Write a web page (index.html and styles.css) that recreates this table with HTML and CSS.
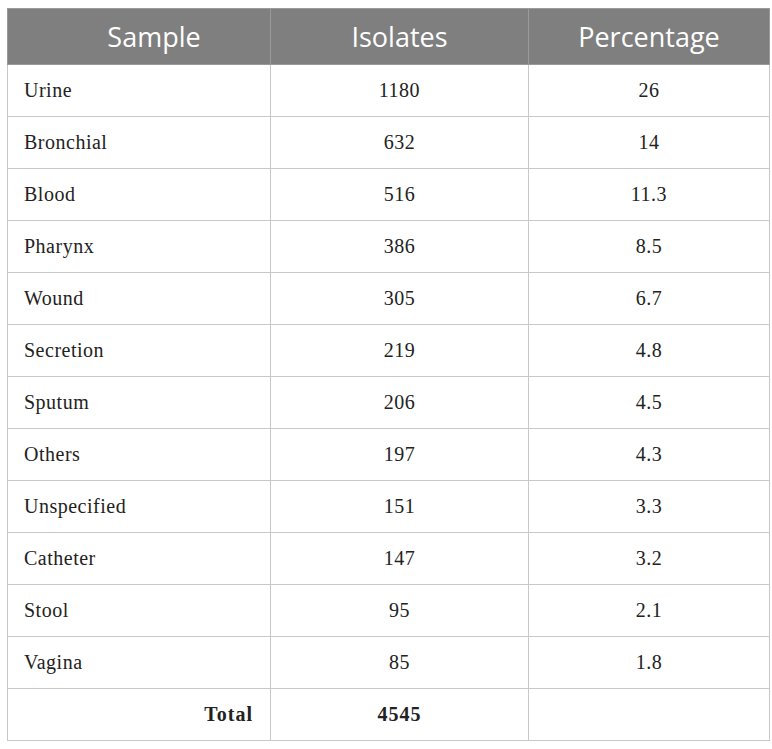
FILE: index.html
```html
<!DOCTYPE html>
<html>
<head>
<meta charset="utf-8">
<link rel="stylesheet" href="styles.css">
</head>
<body>
<table class="data">
  <thead>
    <tr><th class="c1">Sample</th><th class="c2">Isolates</th><th class="c3">Percentage</th></tr>
  </thead>
  <tbody>
    <tr><td class="name">Urine</td><td>1180</td><td>26</td></tr>
    <tr><td class="name">Bronchial</td><td>632</td><td>14</td></tr>
    <tr><td class="name">Blood</td><td>516</td><td>11.3</td></tr>
    <tr><td class="name">Pharynx</td><td>386</td><td>8.5</td></tr>
    <tr><td class="name">Wound</td><td>305</td><td>6.7</td></tr>
    <tr><td class="name">Secretion</td><td>219</td><td>4.8</td></tr>
    <tr><td class="name">Sputum</td><td>206</td><td>4.5</td></tr>
    <tr><td class="name">Others</td><td>197</td><td>4.3</td></tr>
    <tr><td class="name">Unspecified</td><td>151</td><td>3.3</td></tr>
    <tr><td class="name">Catheter</td><td>147</td><td>3.2</td></tr>
    <tr><td class="name">Stool</td><td>95</td><td>2.1</td></tr>
    <tr><td class="name">Vagina</td><td>85</td><td>1.8</td></tr>
    <tr class="total"><td class="tlabel">Total</td><td>4545</td><td></td></tr>
  </tbody>
</table>
</body>
</html>
```
FILE: styles.css
```css
html, body { margin: 0; padding: 0; background: #fff; }
body { padding: 8px 3px 0 7px; }
.data {
  border-collapse: collapse;
  width: 762px;
  table-layout: fixed;
}
.data th, .data td {
  border: 1px solid #c8c8c8;
  box-sizing: border-box;
}
.data th {
  background: #7f7f7f;
  color: #fff;
  font-family: "Open Sans", sans-serif;
  font-weight: 400;
  font-size: 27px;
  height: 56px;
  text-align: center;
  padding: 0;
  border-color: #9a9a9a;
}
.data th.c1 { width: 263px; padding-left: 30px; }
.data th.c2 { width: 258px; }
.data th.c3 { width: 241px; }
.data td {
  font-family: "Liberation Serif", "Times New Roman", serif;
  font-size: 20px;
  letter-spacing: 0.5px;
  color: #222;
  height: 52px;
  text-align: center;
  padding: 0;
}
.data td.name { text-align: left; padding-left: 16px; }
.data td.tlabel { text-align: right; padding-right: 17px; }
.total td { font-weight: 700; letter-spacing: 1px; }
```
